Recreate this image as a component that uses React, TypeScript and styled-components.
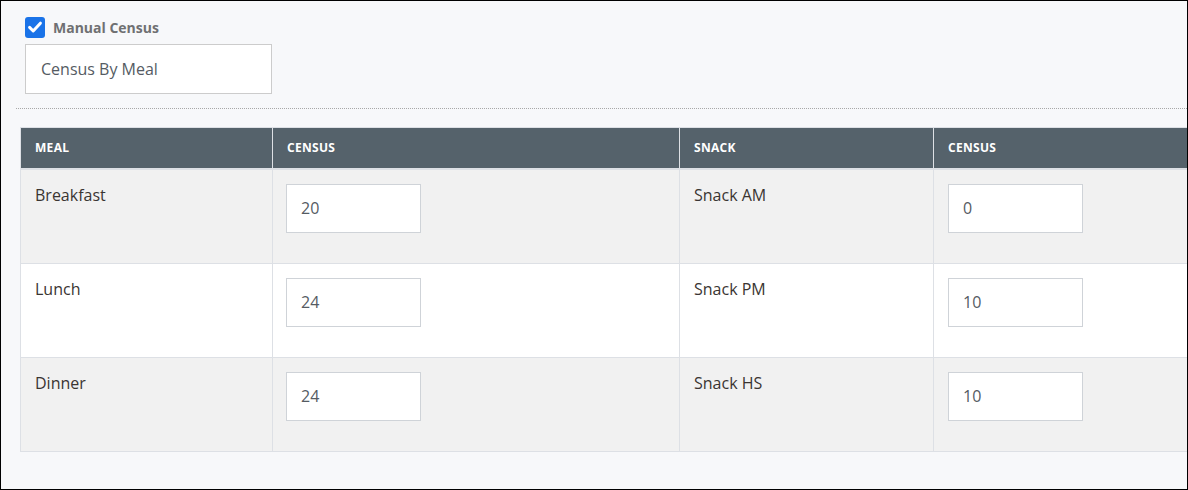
import styled, { createGlobalStyle } from 'styled-components';

const GlobalStyle = createGlobalStyle`
  html, body {
    margin: 0;
    padding: 0;
    background: #ffffff;
  }
  * {
    box-sizing: border-box;
  }
`;

const Frame = styled.div`
  width: 1188px;
  height: 490px;
  border: 1px solid #000000;
  background: #f7f8fa;
  overflow: hidden;
  padding: 15px 0 0 15px;
  font-family: 'Open Sans', 'Noto Sans', sans-serif;
`;

const TopSection = styled.div`
  padding-left: 9px;
  display: flex;
  flex-direction: column;
  align-items: flex-start;
`;

const CheckRow = styled.label`
  display: flex;
  align-items: center;
  gap: 8px;
  height: 22px;
`;

const CheckBox = styled.span`
  width: 20px;
  height: 21px;
  border-radius: 3px;
  background: #1a73e8;
  display: flex;
  align-items: center;
  justify-content: center;
`;

const CheckLabel = styled.span`
  font-size: 14px;
  font-weight: 700;
  color: #6f7072;
`;

const TextInput = styled.input<{ $w: number }>`
  width: ${(p) => p.$w}px;
  height: 49px;
  border: 1px solid #cfd3d8;
  background: #ffffff;
  padding: 0 14px;
  font-family: 'Open Sans', 'Noto Sans', sans-serif;
  font-size: 16px;
  color: #555b63;
  outline: none;
`;

const TitleInput = styled(TextInput)`
  margin-top: 6px;
  height: 50px;
  padding: 0 15px;
  border-color: #cccccc;
`;

const Separator = styled.div`
  margin-top: 14px;
  border-top: 1px dotted #a8a8a8;
  width: 100%;
`;

const Table = styled.table`
  margin: 18px 0 0 4px;
  border-collapse: collapse;
  table-layout: fixed;
  width: 1320px;
  border-top: 1px solid #dde0e5;
`;

const HeadCell = styled.th<{ $w: number }>`
  width: ${(p) => p.$w}px;
  height: 41px;
  background: #55626b;
  color: #ffffff;
  font-size: 12px;
  font-weight: 700;
  text-transform: uppercase;
  text-align: left;
  padding: 0 14px;
  border-left: 1px solid #dde0e5;
  border-bottom: 2px solid #dde0e5;
  letter-spacing: 0.3px;
`;

const Row = styled.tr<{ $striped: boolean }>`
  background: ${(p) => (p.$striped ? '#f1f1f1' : '#ffffff')};
`;

const Cell = styled.td`
  vertical-align: top;
  padding: 13px 14px 30px 14px;
  height: 93px;
  border: 1px solid #dde0e5;
  font-size: 16px;
  line-height: 24px;
  color: #3a3532;
`;

const InputCell = styled(Cell)<{ $left: number }>`
  padding-top: 14px;
  padding-left: ${(p) => p.$left}px;
`;

type CensusRow = {
  meal: string;
  mealCount: string;
  snack: string;
  snackCount: string;
};

const rows: CensusRow[] = [
  { meal: 'Breakfast', mealCount: '20', snack: 'Snack AM', snackCount: '0' },
  { meal: 'Lunch', mealCount: '24', snack: 'Snack PM', snackCount: '10' },
  { meal: 'Dinner', mealCount: '24', snack: 'Snack HS', snackCount: '10' },
];

const App = () => {
  return (
    <>
      <GlobalStyle />
      <Frame>
        <TopSection>
          <CheckRow>
            <CheckBox>
              <svg width="16" height="16" viewBox="0 0 16 16">
                <path d="M2.6 8.4 L6.2 12 L13.4 4.2" fill="none" stroke="#ffffff" strokeWidth="3" strokeLinecap="round" strokeLinejoin="round" />
              </svg>
            </CheckBox>
            <CheckLabel>Manual Census</CheckLabel>
          </CheckRow>
          <TitleInput $w={247} defaultValue="Census By Meal" />
        </TopSection>
        <Separator />
        <Table>
          <thead>
            <tr>
              <HeadCell $w={252}>Meal</HeadCell>
              <HeadCell $w={407}>Census</HeadCell>
              <HeadCell $w={254}>Snack</HeadCell>
              <HeadCell $w={407}>Census</HeadCell>
            </tr>
          </thead>
          <tbody>
            {rows.map((r, i) => (
              <Row key={r.meal} $striped={i % 2 === 0}>
                <Cell>{r.meal}</Cell>
                <InputCell $left={13}>
                  <TextInput $w={135} defaultValue={r.mealCount} />
                </InputCell>
                <Cell>{r.snack}</Cell>
                <InputCell $left={14}>
                  <TextInput $w={135} defaultValue={r.snackCount} />
                </InputCell>
              </Row>
            ))}
          </tbody>
        </Table>
      </Frame>
    </>
  );
};

export default App;
